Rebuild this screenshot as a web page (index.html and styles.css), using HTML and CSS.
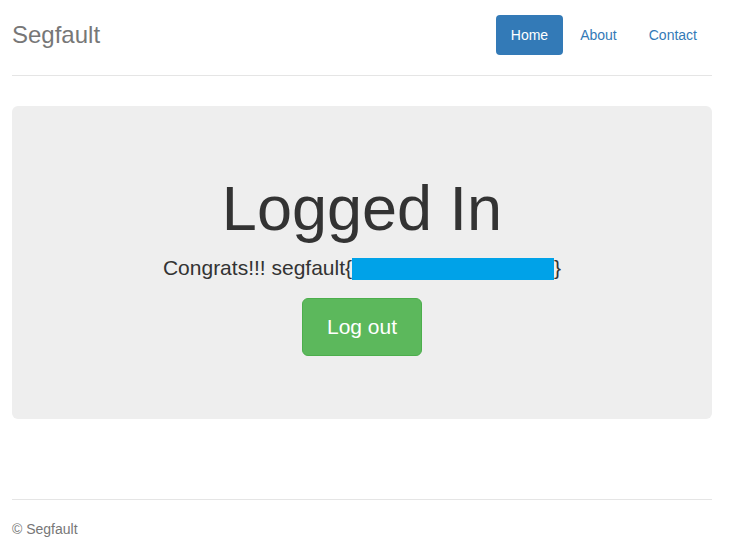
FILE: index.html
```html
<!DOCTYPE html>
<html>
<head>
<meta charset="utf-8">
<title>Segfault</title>
<link rel="stylesheet" href="styles.css">
</head>
<body>
<div class="container">
  <div class="header">
    <h3 class="brand">Segfault</h3>
    <ul class="nav">
      <li><a class="pill active" href="#">Home</a></li>
      <li><a class="pill" href="#">About</a></li>
      <li><a class="pill" href="#">Contact</a></li>
    </ul>
  </div>
  <div class="jumbotron">
    <h1 class="title">Logged In</h1>
    <p class="lead">Congrats!!! segfault{<span class="redacted"></span>}</p>
    <p class="actions"><a class="btn" href="#">Log out</a></p>
  </div>
  <div class="footer">
    <p class="copy">© Segfault</p>
  </div>
</div>
</body>
</html>
```
FILE: styles.css
```css
html, body {
  margin: 0;
  padding: 0;
  background: #fff;
}
body {
  font-family: "Liberation Sans", Arial, sans-serif;
  font-size: 14px;
  line-height: 1.42857;
  color: #333;
}
.container {
  width: 700px;
  padding: 15px 17px 0 12px;
}
.header {
  display: flex;
  justify-content: space-between;
  align-items: center;
  padding-bottom: 20px;
  border-bottom: 1px solid #e5e5e5;
  margin-bottom: 30px;
}
.brand {
  margin: 0;
  font-size: 24px;
  font-weight: 500;
  line-height: 40px;
  color: #777;
}
.nav {
  display: flex;
  list-style: none;
  margin: 0;
  padding: 0;
}
.nav li + li {
  margin-left: 2px;
}
.pill {
  display: block;
  padding: 10px 15px;
  line-height: 20px;
  border-radius: 4px;
  color: #337ab7;
  text-decoration: none;
}
.pill.active {
  background: #337ab7;
  color: #fff;
}
.jumbotron {
  background: #eee;
  border-radius: 6px;
  padding: 48px 60px;
  text-align: center;
  margin-bottom: 80px;
}
.title {
  margin: 20px 0 10px;
  font-size: 63px;
  font-weight: 500;
  line-height: 1.1;
  color: #333;
}
.lead {
  margin: 0 0 15px;
  font-size: 21px;
  line-height: 30px;
  color: #333;
}
.redacted {
  display: inline-block;
  width: 202px;
  height: 22px;
  background: #00a2e8;
  vertical-align: -5px;
}
.actions {
  margin: 0 0 15px;
  font-size: 21px;
  line-height: 28px;
}
.btn {
  display: inline-block;
  padding: 14px 24px;
  font-size: 21px;
  line-height: 28px;
  color: #fff;
  background: #5cb85c;
  border: 1px solid #4cae4c;
  border-radius: 6px;
  text-decoration: none;
  vertical-align: middle;
}
.footer {
  border-top: 1px solid #e5e5e5;
  padding-top: 20px;
  color: #777;
}
.copy {
  margin: 0 0 10px;
}
```
